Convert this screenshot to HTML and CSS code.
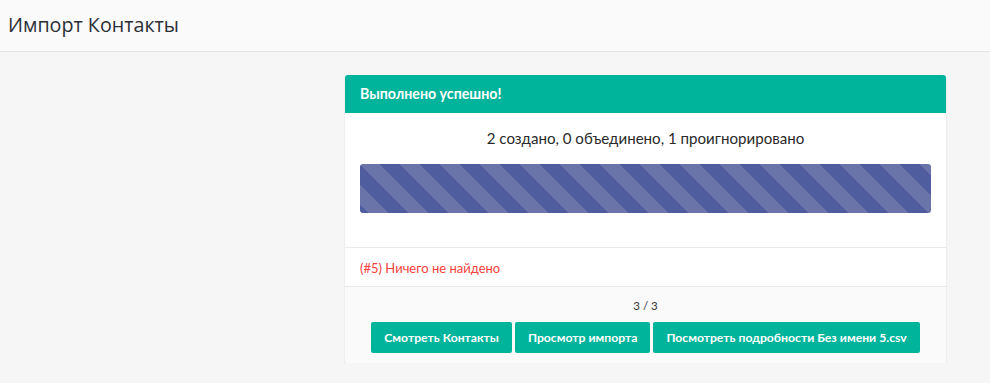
FILE: index.html
```html
<!DOCTYPE html>
<html>
<head>
<meta charset="utf-8">
<title>Импорт Контакты</title>
<link rel="stylesheet" href="styles.css">
</head>
<body>
<div class="page-header">
    <h3>Импорт Контакты</h3>
</div>
<div class="content">
    <div class="panel">
        <div class="panel-heading">Выполнено успешно!</div>
        <div class="panel-body">
            <p class="summary">2 создано, 0 объединено, 1 проигнорировано</p>
            <div class="progress"></div>
        </div>
        <div class="panel-errors">(#5) Ничего не найдено</div>
        <div class="panel-footer">
            <div class="pages">3 / 3</div>
            <div class="btn-group">
                <a class="btn">Смотреть Контакты</a>
                <a class="btn">Просмотр импорта</a>
                <a class="btn">Посмотреть подробности Без имени 5.csv</a>
            </div>
        </div>
    </div>
</div>
</body>
</html>
```

FILE: styles.css
```css
html, body {
    margin: 0;
    padding: 0;
}

body {
    background-color: #f6f6f6;
    font-family: "Lato", "Noto Sans", sans-serif;
    font-size: 14px;
    color: #333;
}

.page-header {
    height: 51px;
    background-color: #fafafa;
    border-bottom: 1px solid #e3e3e3;
    display: flex;
    align-items: center;
    padding: 0 8px;
}

.page-header h3 {
    margin: 0 0 2px 0;
    font-family: "Open Sans", sans-serif;
    font-weight: normal;
    font-size: 19.7px;
    color: #2b2f36;
}

.content {
    padding: 23px 0 0 345px;
}

.panel {
    width: 601px;
    background-color: #fff;
    border-radius: 3px;
    box-shadow: 0 1px 2px rgba(0,0,0,.12);
    overflow: hidden;
}

.panel-heading {
    background-color: #00b49c;
    color: #fff;
    font-weight: bold;
    font-size: 14.2px;
    height: 38px;
    line-height: 38px;
    padding: 0 15px;
}

.panel-body {
    padding: 15px 15px 34px;
}

.summary {
    margin: 0 0 16px;
    text-align: center;
    font-size: 15.1px;
    line-height: 20px;
    color: #2a2a2a;
}

.progress {
    height: 49px;
    border-radius: 3px;
    background-color: #4f5c9e;
    background-image: linear-gradient(45deg, #6a74a9 25%, transparent 25%, transparent 50%, #6a74a9 50%, #6a74a9 75%, transparent 75%, transparent);
    background-size: 40px 40px;
}

.panel-errors {
    border-top: 1px solid #ebebeb;
    padding: 0 15px;
    height: 38px;
    line-height: 40px;
    font-size: 13px;
    color: #f5413c;
}

.panel-footer {
    background-color: #fafafa;
    border-top: 1px solid #e8e8e8;
    padding: 11px 0 10px;
    text-align: center;
}

.pages {
    font-size: 11.5px;
    line-height: 16px;
    color: #333;
    margin-bottom: 8px;
}

.btn-group {
    display: flex;
    justify-content: center;
    gap: 3px;
}

.btn {
    display: block;
    background-color: #00b49c;
    color: #fff;
    font-size: 12.2px;
    font-weight: bold;
    height: 31px;
    line-height: 31px;
    padding: 0 13px;
    border-radius: 2px;
}
```
